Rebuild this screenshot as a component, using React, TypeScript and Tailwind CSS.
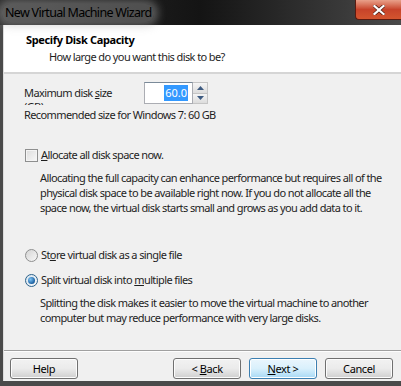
import React from "react";

const font = { fontFamily: '"Noto Sans", "Open Sans", sans-serif' };

function WinButton({ label, primary }: { label: React.ReactNode; primary?: boolean }) {
  return (
    <button
      className={
        "h-[21px] w-[68px] rounded-[3px] border text-[11px] leading-none tracking-[-0.4px] text-black " +
        (primary
          ? "border-[#3c7fb1] bg-gradient-to-b from-[#eaf6fd] via-[#d9f0fc] to-[#a7d9f5] shadow-[inset_0_0_0_1px_#fff]"
          : "border-[#707070] bg-gradient-to-b from-[#f2f2f2] via-[#ebebeb] to-[#cfcfcf] shadow-[inset_0_0_0_1px_#fcfcfc]")
      }
    >
      {label}
    </button>
  );
}

export default function App() {
  return (
    <div className="flex h-[386px] w-[401px] flex-col overflow-hidden bg-[#1c1c1c] text-[11px] tracking-[-0.6px] text-[#1e1e1e]" style={font}>
      {/* Title bar */}
      <div className="relative flex h-[25px] shrink-0 items-center bg-gradient-to-r from-[#2e2e2e] via-[#141414] to-[#4a4a4a]">
        <span className="ml-[2px] rounded-[8px] bg-[#a0a0a0]/40 px-[3px] text-[12.5px] leading-[18px] tracking-[-0.7px] text-black shadow-[0_0_8px_4px_rgba(170,170,170,0.45)]">
          New Virtual Machine Wizard
        </span>
        <div className="absolute right-0 top-0 flex h-[20px] w-[46px] items-center justify-center rounded-bl-[4px] border border-t-0 border-r-0 border-[#5a1a10] bg-gradient-to-b from-[#e8a08a] via-[#c7432a] to-[#d4552f]">
          <svg width="12" height="10" viewBox="0 0 12 10">
            <path d="M1.5 1 L10.5 9 M10.5 1 L1.5 9" stroke="#4a1a10" strokeWidth="3.6" strokeLinecap="square" />
            <path d="M1.5 1 L10.5 9 M10.5 1 L1.5 9" stroke="#fff" strokeWidth="2.2" strokeLinecap="square" />
          </svg>
        </div>
      </div>

      {/* Window body */}
      <div className="flex flex-1 flex-col border-l-[3px] border-b-[5px] border-[#4a4a4a]">
        <div className="flex flex-1 flex-col border-l border-[#dcdcdc] bg-[#f0f0f0]">
          {/* Header */}
          <div className="h-[49px] shrink-0 border-b-2 border-[#d5d5d5] bg-white pl-[22px] pt-[7px]">
            <div className="text-[11px] font-bold leading-[16px] tracking-[-0.35px] text-black">Specify Disk Capacity</div>
            <div className="pl-[23px] pt-[1px] leading-[16px]">How large do you want this disk to be?</div>
          </div>

          {/* Content */}
          <div className="flex flex-1 flex-col pl-[20px] pr-[8px]">
            <div className="mt-[8px] flex items-start">
              <div className="relative h-[23px] w-[120px] pt-[3px] leading-[16px]">
                Maximum disk <u>s</u>ize
                {/* label clipped by the field height */}
                <div className="absolute left-0 top-[20px] h-[3px] overflow-hidden">
                  <div className="-mt-[3px] leading-[16px]">(GB):</div>
                </div>
              </div>
              <div className="flex h-[22px]">
                <div className="flex w-[49px] items-center justify-end border border-[#abadb3] border-t-[#7a8a99] bg-white pr-[4px]">
                  <span className="bg-[#3399ff] px-[1px] leading-[16px] tracking-normal text-white">60.0</span>
                </div>
                <div className="flex w-[15px] flex-col border border-l-0 border-[#c5c5c5] bg-[#ececec]">
                  <div className="flex flex-1 items-center justify-center border-b border-[#c5c5c5] bg-gradient-to-b from-[#f5f5f5] to-[#dcdcdc]">
                    <svg width="7" height="4" viewBox="0 0 7 4"><path d="M0 4 L3.5 0 L7 4Z" fill="#3d5a80" /></svg>
                  </div>
                  <div className="flex flex-1 items-center justify-center bg-gradient-to-b from-[#f5f5f5] to-[#dcdcdc]">
                    <svg width="7" height="4" viewBox="0 0 7 4"><path d="M0 0 L3.5 4 L7 0Z" fill="#3d5a80" /></svg>
                  </div>
                </div>
              </div>
            </div>
            <div className="mt-[2px] leading-[16px]">Recommended size for Windows 7: 60 GB</div>

            <div className="mt-[24px] flex items-center gap-[3px]">
              <span className="ml-[1px] h-[13px] w-[13px] border border-[#8e8f8f] bg-gradient-to-br from-[#dcdcdc] to-[#f8f8f8] shadow-[inset_0_0_0_1px_#f4f4f4]" />
              <span className="leading-[16px]"><u>A</u>llocate all disk space now.</span>
            </div>
            <div className="mt-[7px] pl-[16px] leading-[15px]">
              Allocating the full capacity can enhance performance but requires all of the physical disk space to be available right now. If you do not allocate all the space now, the virtual disk starts small and grows as you add data to it.
            </div>

            <div className="mt-[32px] flex items-center gap-[3px]">
              <span className="ml-[1px] h-[13px] w-[13px] rounded-full border border-[#8e8f8f] bg-gradient-to-br from-[#d4d4d4] to-[#f8f8f8]" />
              <span className="leading-[16px]">St<u>o</u>re virtual disk as a single file</span>
            </div>
            <div className="mt-[9px] flex items-center gap-[3px]">
              <span className="ml-[1px] flex h-[13px] w-[13px] items-center justify-center rounded-full border border-[#2c628b] bg-gradient-to-br from-[#d4e4f0] to-[#f8f8f8]">
                <span className="h-[7px] w-[7px] rounded-full bg-[radial-gradient(circle_at_35%_35%,#7cc3f5,#1b5fa0_70%,#0d3a66)]" />
              </span>
              <span className="leading-[16px]">Split virtual disk into <u>m</u>ultiple files</span>
            </div>
            <div className="mt-[7px] pl-[16px] leading-[15px]">
              Splitting the disk makes it easier to move the virtual machine to another computer but may reduce performance with very large disks.
            </div>
          </div>

          {/* Footer */}
          <div className="shrink-0">
            <div className="border-t border-[#a0a0a0]" />
            <div className="border-t border-[#fdfdfd]" />
            <div className="flex h-[29px] items-start pl-[6px] pr-[8px] pt-[6px]">
              <WinButton label="Help" />
              <div className="flex-1" />
              <div className="flex gap-[8px]">
                <WinButton label={<>&lt; <u>B</u>ack</>} />
                <WinButton label={<><u>N</u>ext &gt;</>} primary />
                <WinButton label="Cancel" />
              </div>
            </div>
          </div>
        </div>
      </div>
    </div>
  );
}
